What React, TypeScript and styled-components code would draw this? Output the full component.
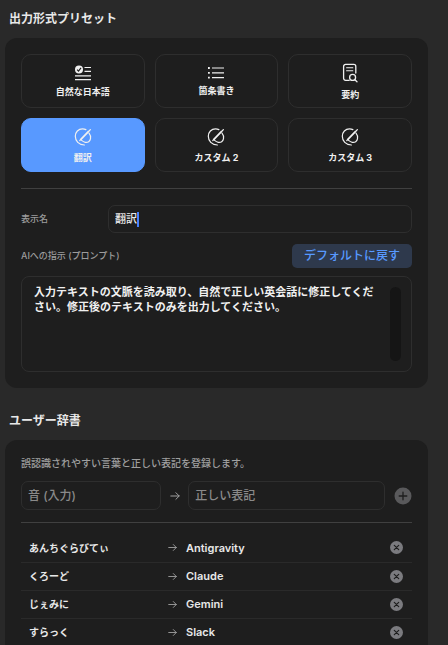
import React, { useState } from "react";
import styled, { createGlobalStyle } from "styled-components";

const FONT = 'Inter, "Noto Sans CJK JP", sans-serif';

const GlobalStyle = createGlobalStyle`
  *, *::before, *::after { box-sizing: border-box; }
  html { background: #292929; }
  body {
    margin: 0;
    background: #292929;
    color: #e8e8e8;
    font-family: ${FONT};
    overflow: hidden;
  }
  button, input, textarea { font: inherit; color: inherit; }
`;

const Page = styled.main`
  height: 100vh;
  overflow: hidden;
  padding: 9px 20px 0 5px;
`;

const Section = styled.section`
  & + & { margin-top: 23px; }
`;

const Heading = styled.h2`
  margin: 0 0 9px;
  padding-left: 4px;
  font-size: 12px;
  line-height: 20px;
  font-weight: 700;
`;

const Panel = styled.div`
  padding: 16px;
  border-radius: 12px;
  background: #1e1e1e;
`;

const PresetGrid = styled.div`
  display: grid;
  grid-template-columns: repeat(3, 1fr);
  gap: 10px;
`;

const PresetButton = styled.button<{ $active: boolean }>`
  display: flex;
  flex-direction: column;
  align-items: center;
  justify-content: center;
  gap: 4px;
  height: 54px;
  padding: 0;
  border: 1px solid ${(p) => (p.$active ? "#5899ff" : "#2e2e2e")};
  border-radius: 10px;
  background: ${(p) => (p.$active ? "#5899ff" : "#1e1e1e")};
  color: #f0f0f0;
  font-size: 9px;
  line-height: 13px;
  font-weight: 700;
`;

const Divider = styled.hr<{ $above: number; $below: number }>`
  height: 1px;
  margin: ${(p) => p.$above}px 0 ${(p) => p.$below}px;
  border: 0;
  background: #404040;
`;

const NameRow = styled.div`
  display: grid;
  grid-template-columns: 87px 1fr;
  align-items: center;
`;

const Label = styled.label`
  color: #9c9c9c;
  font-size: 9px;
  line-height: 14px;
  font-weight: 500;
`;

const NameField = styled.div`
  display: flex;
  align-items: center;
  height: 28px;
  padding: 0 6px;
  border: 1px solid #2e2e2e;
  border-radius: 7px;
`;

const NameInput = styled.input`
  field-sizing: content;
  padding: 0;
  border: 0;
  outline: 0;
  background: transparent;
  font-size: 11px;
  line-height: 20px;
  font-weight: 500;
`;

const Caret = styled.span`
  flex: none;
  width: 2px;
  height: 15px;
  background: #4680ff;
`;

const PromptHead = styled.div`
  display: flex;
  align-items: center;
  justify-content: space-between;
  margin: 11px 0 8px;
`;

const ResetButton = styled.button`
  height: 24px;
  padding: 0 12px;
  border: 0;
  border-radius: 5px;
  background: #2e394c;
  color: #5899ff;
  font-size: 12px;
  line-height: 20px;
  font-weight: 500;
`;

const PromptBox = styled.div`
  display: flex;
  height: 96px;
  padding: 8px 10px 10px 12px;
  border: 1px solid #2e2e2e;
  border-radius: 8px;
`;

const PromptText = styled.textarea`
  flex: 1;
  min-width: 0;
  padding: 0 6px 0 0;
  border: 0;
  outline: 0;
  resize: none;
  overflow: hidden;
  background: transparent;
  color: #f0f0f0;
  font-size: 11px;
  line-height: 15px;
  font-weight: 700;
`;

const ScrollTrack = styled.div`
  width: 11px;
  margin-top: 2px;
  border-radius: 6px;
  background: #151515;
`;

const Note = styled.p`
  margin: 0 0 11px;
  color: #a0a0a0;
  font-size: 10px;
  line-height: 14px;
  font-weight: 500;
`;

const AddRow = styled.form`
  display: grid;
  grid-template-columns: 141fr 27px 198fr 27px;
  align-items: center;
  justify-items: center;
`;

const WordInput = styled.input`
  width: 100%;
  height: 29px;
  padding: 0 6px;
  border: 1px solid #2e2e2e;
  border-radius: 7px;
  outline: 0;
  background: transparent;
  font-size: 12px;
  font-weight: 500;
  &::placeholder { color: #8a8a8a; opacity: 1; }
`;

const IconButton = styled.button`
  display: grid;
  place-items: center;
  padding: 0;
  border: 0;
  background: transparent;
`;

const AddButton = styled(IconButton)`
  justify-self: end;
`;

const Table = styled.table`
  width: 100%;
  border-collapse: collapse;
  table-layout: fixed;
  font-size: 10px;
  line-height: 14px;
  font-weight: 700;
`;

const Row = styled.tr`
  height: 28px;
  border-bottom: 1px solid #2a2a2a;
`;

const Cell = styled.td<{ $size: "from" | "arrow" | "to" | "remove" }>`
  padding: ${(p) => (p.$size === "from" ? "0 0 0 8px" : "0")};
  width: ${(p) => ({ from: "147px", arrow: "18px", to: "auto", remove: "22px" })[p.$size]};
  font-size: ${(p) => (p.$size === "to" ? "11px" : "10px")};
  font-weight: ${(p) => (p.$size === "to" ? 600 : 700)};
`;

const ChecklistIcon = () => (
  <svg width="18" height="16" viewBox="0 0 18 16" fill="none" stroke="currentColor" strokeWidth="1.2" aria-hidden="true">
    <circle cx="5" cy="4.5" r="4" fill="currentColor" stroke="none" />
    <path d="M3.1 4.6 4.5 6.1 7 2.8" stroke="#1e1e1e" />
    <path d="M10.5 2.5H17M10.5 6.3H17M1 10.8H17M1 14.6H17" />
  </svg>
);

const BulletsIcon = () => (
  <svg width="18" height="15" viewBox="0 0 18 15" fill="none" stroke="currentColor" strokeWidth="1.2" aria-hidden="true">
    <path d="M5 3H17M5 7.8H17M5 12.6H17" />
    <path d="M1 3H2.8M1 7.8H2.8M1 12.6H2.8" strokeWidth="1.8" />
  </svg>
);

const DocSearchIcon = () => (
  <svg width="16" height="22" viewBox="0 0 16 22" fill="none" stroke="currentColor" strokeWidth="1.3" strokeLinecap="round" aria-hidden="true">
    <path d="M7.2 18.3H3.6A2 2 0 0 1 1.6 16.3V4.4A2 2 0 0 1 3.6 2.4H11.8A2 2 0 0 1 13.8 4.4V11" />
    <path d="M4.6 5.7H10.8M4.6 8.7H10.8" strokeWidth="1.1" />
    <circle cx="10.6" cy="15.4" r="3" />
    <path d="M12.9 17.7 15 19.7" />
  </svg>
);

const PenCircleIcon = () => (
  <svg width="18" height="20" viewBox="0 0 18 20" fill="none" stroke="currentColor" strokeWidth="1.2" strokeLinecap="round" aria-hidden="true">
    <path d="M11.9 2.6C10.8 2.1 9.7 1.9 8.5 1.9 4.4 1.9 1.3 5.1 1.3 9.3 1.3 14 4.8 17.8 10.4 18" />
    <path d="M15 6.2C16.4 7.9 16.8 9.7 16.5 11.7 16.1 14.4 13.8 15.8 11.3 15.3 9.9 15 8.7 14.3 7.6 13.4" />
    <path d="M6.9 12.4 14.6 4.4" strokeWidth="1.8" />
    <path d="M6.9 12.4 5.8 13.5M15.5 3.5 16.4 2.6" />
  </svg>
);

const ArrowIcon = ({ size }: { size: number }) => (
  <svg width={size} height={size} viewBox="0 0 10 10" fill="none" stroke="#a0a0a0" strokeWidth="1" strokeLinecap="round" strokeLinejoin="round" display="block" aria-hidden="true">
    <path d="M.8 5H9.2M5.9 1.7 9.2 5 5.9 8.3" />
  </svg>
);

const PlusIcon = () => (
  <svg width="18" height="18" viewBox="0 0 18 18" aria-hidden="true">
    <circle cx="9" cy="9" r="8.5" fill="#59595b" />
    <path d="M9 5.2V12.8M5.2 9H12.8" stroke="#1e1e1e" strokeWidth="1.3" strokeLinecap="round" />
  </svg>
);

const RemoveIcon = () => (
  <svg width="13" height="13" viewBox="0 0 13 13" aria-hidden="true">
    <circle cx="6.5" cy="6.5" r="6.5" fill="#7b7b7f" />
    <path d="M4.3 4.3 8.7 8.7M8.7 4.3 4.3 8.7" stroke="#1e1e1e" strokeWidth="1.2" strokeLinecap="round" />
  </svg>
);

const presets = [
  { name: "自然な日本語", Icon: ChecklistIcon },
  { name: "箇条書き", Icon: BulletsIcon },
  { name: "要約", Icon: DocSearchIcon },
  { name: "翻訳", Icon: PenCircleIcon },
  { name: "カスタム 2", Icon: PenCircleIcon },
  { name: "カスタム 3", Icon: PenCircleIcon },
];

const words = [
  { from: "あんちぐらびてぃ", to: "Antigravity" },
  { from: "くろーど", to: "Claude" },
  { from: "じぇみに", to: "Gemini" },
  { from: "すらっく", to: "Slack" },
];

export default function App() {
  const [active, setActive] = useState(3);

  return (
    <Page lang="ja">
      <GlobalStyle />
      <Section>
        <Heading>出力形式プリセット</Heading>
        <Panel>
          <PresetGrid>
            {presets.map(({ name, Icon }, i) => (
              <PresetButton key={name} type="button" $active={i === active} aria-pressed={i === active} onClick={() => setActive(i)}>
                <Icon />
                {name}
              </PresetButton>
            ))}
          </PresetGrid>
          <Divider $above={16} $below={16} />
          <NameRow>
            <Label htmlFor="preset-name">表示名</Label>
            <NameField>
              <NameInput id="preset-name" defaultValue="翻訳" />
              <Caret />
            </NameField>
          </NameRow>
          <PromptHead>
            <Label htmlFor="prompt">AIへの指示 (プロンプト)</Label>
            <ResetButton type="button">デフォルトに戻す</ResetButton>
          </PromptHead>
          <PromptBox>
            <PromptText
              id="prompt"
              defaultValue="入力テキストの文脈を読み取り、自然で正しい英会話に修正してください。修正後のテキストのみを出力してください。"
            />
            <ScrollTrack />
          </PromptBox>
        </Panel>
      </Section>
      <Section>
        <Heading>ユーザー辞書</Heading>
        <Panel>
          <Note>誤認識されやすい言葉と正しい表記を登録します。</Note>
          <AddRow onSubmit={(e) => e.preventDefault()}>
            <WordInput aria-label="音 (入力)" placeholder="音 (入力)" />
            <ArrowIcon size={10} />
            <WordInput aria-label="正しい表記" placeholder="正しい表記" />
            <AddButton type="submit" aria-label="追加">
              <PlusIcon />
            </AddButton>
          </AddRow>
          <Divider $above={12} $below={11} />
          <Table>
            <tbody>
              {words.map(({ from, to }) => (
                <Row key={to}>
                  <Cell $size="from">{from}</Cell>
                  <Cell $size="arrow">
                    <ArrowIcon size={9} />
                  </Cell>
                  <Cell $size="to">{to}</Cell>
                  <Cell $size="remove">
                    <IconButton type="button" aria-label={`${to} を削除`}>
                      <RemoveIcon />
                    </IconButton>
                  </Cell>
                </Row>
              ))}
            </tbody>
          </Table>
        </Panel>
      </Section>
    </Page>
  );
}
